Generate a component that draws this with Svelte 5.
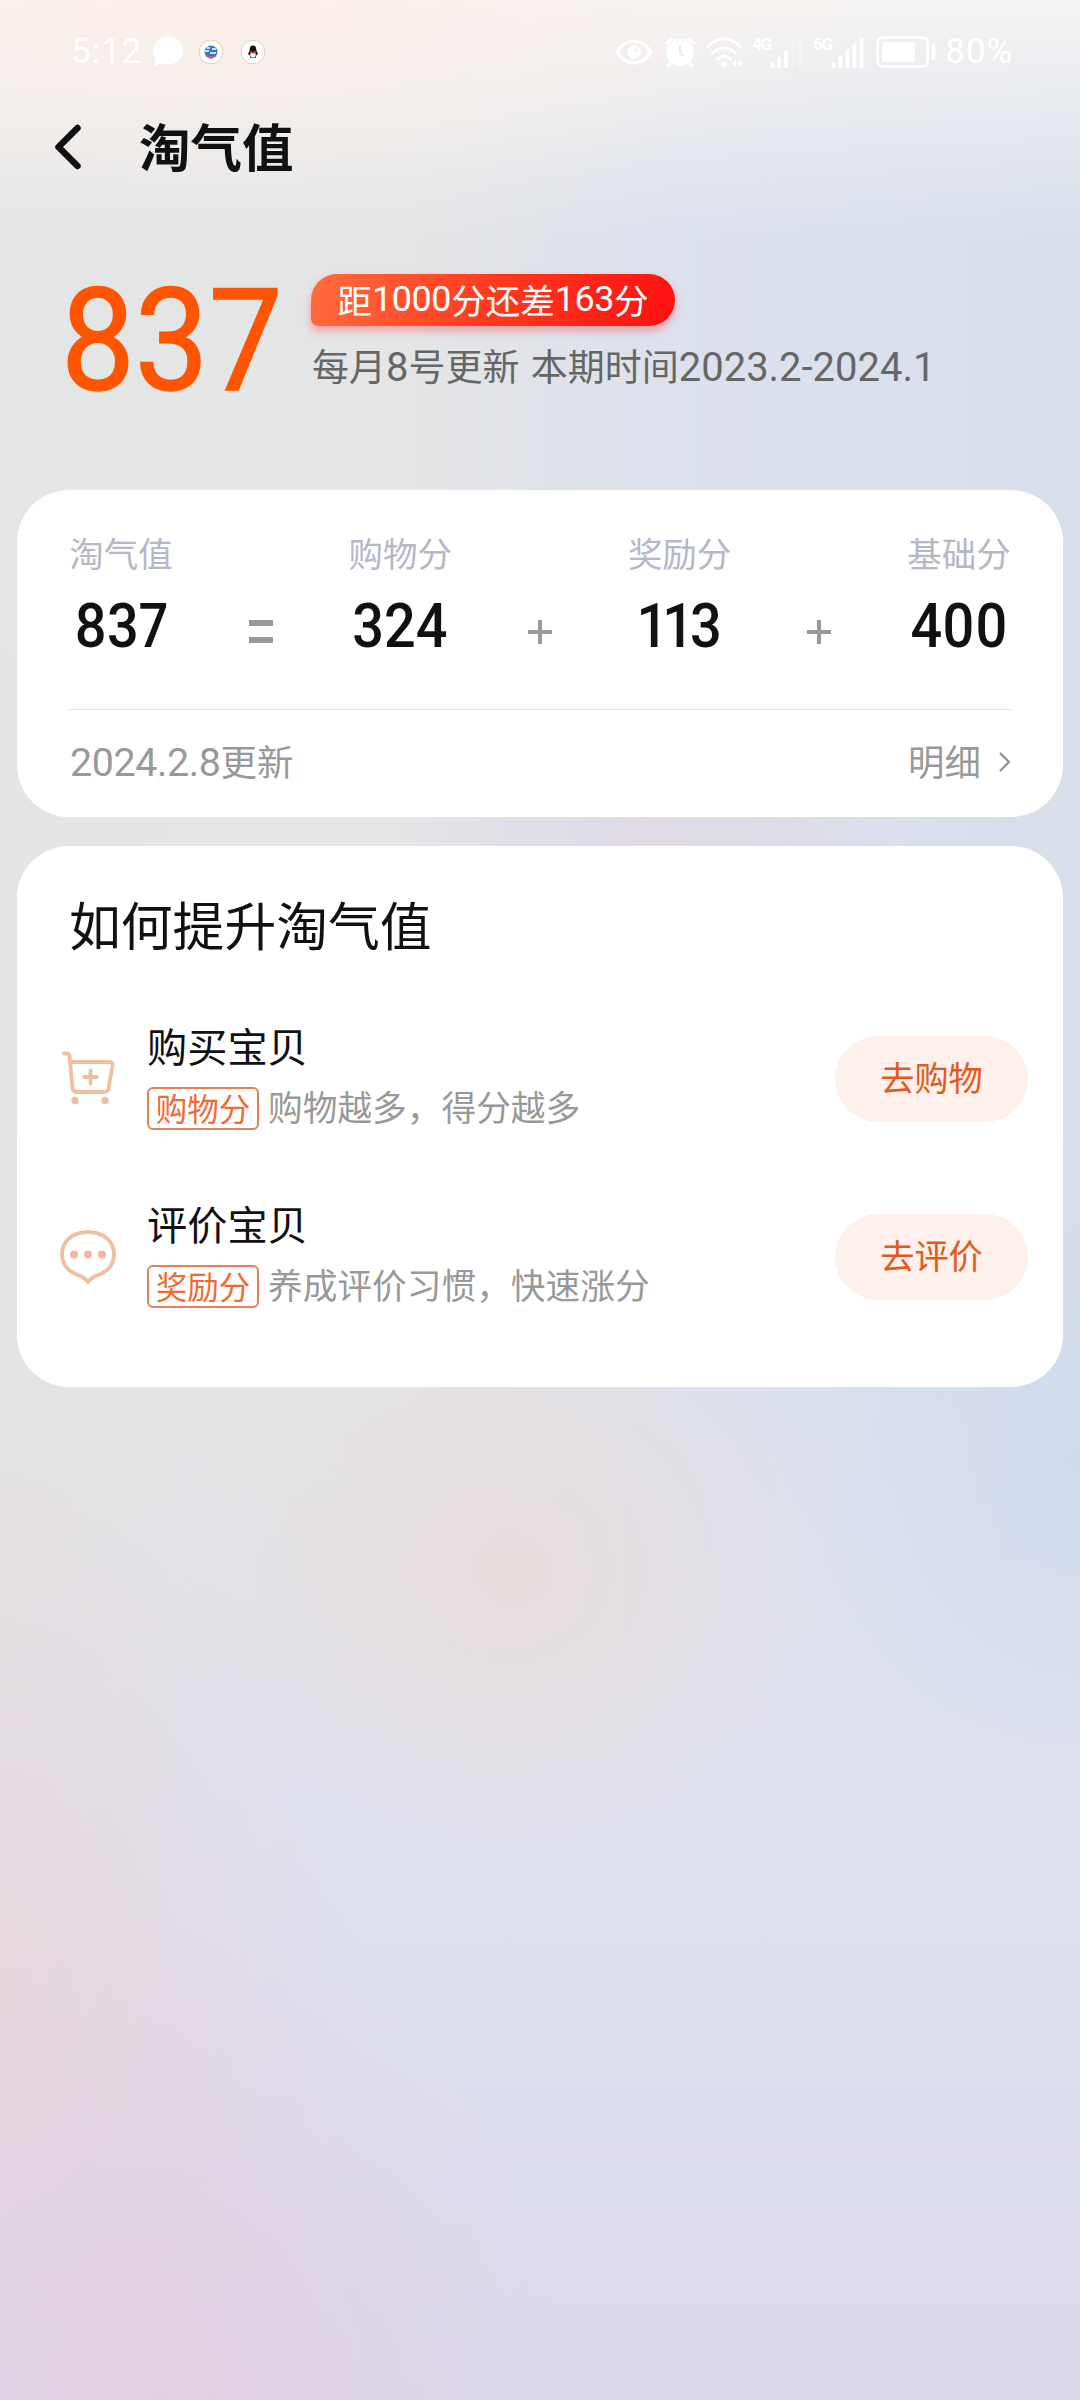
<script>
  const scores = [
    { label: '淘气值', value: '837' },
    { label: '购物分', value: '324', sign: 'equal' },
    { label: '奖励分', value: '113', sign: 'plus' },
    { label: '基础分', value: '400', sign: 'plus' }
  ];

  const tasks = [
    { icon: 'cart', title: '购买宝贝', tag: '购物分', desc: '购物越多，得分越多', action: '去购物' },
    { icon: 'comment', title: '评价宝贝', tag: '奖励分', desc: '养成评价习惯，快速涨分', action: '去评价' }
  ];

  // numbers use their own face, so split them from the Chinese text
  function parts(text) {
    return text.split(/([\d.\-]+)/).filter(Boolean).map((t) => ({ t, num: /\d/.test(t) }));
  }
</script>

{#snippet mixed(text)}{#each parts(text) as p}{#if p.num}<span class="num">{p.t}</span>{:else}{p.t}{/if}{/each}{/snippet}

<div class="page">
  <div class="status">
    <div class="status-left">
      <span class="time">5:12</span>
      <svg class="bubble" width="32" height="32" viewBox="0 0 32 32"><path d="M16 0.5C24.5 0.5 31 6.5 31 14.5S24.500 28.500 16 28.500C13 28.500 10.500 28 8.200 27L2 31L3.500 23.500C1.800 21 1 18 1 14.500C1 6.500 7.500 0.500 16 0.500Z" fill="#fff" /></svg>
      <svg class="app" width="26" height="26" viewBox="0 0 26 26">
        <circle cx="13" cy="13" r="11.800" fill="#fff" stroke="#e8cdb4" stroke-width="1" />
        <circle cx="13" cy="13" r="6.500" fill="#3478c8" />
        <path d="M8 17H18Q13 22 8 17Z" fill="#c4606c" />
        <path d="M7 12H11M12 14H18M14 10H18M9 9H12" stroke="#fff" stroke-width="1.500" />
      </svg>
      <svg class="app" width="26" height="26" viewBox="0 0 26 26">
        <circle cx="13" cy="13" r="11.800" fill="#fff" stroke="#e8cdb4" stroke-width="1" />
        <path d="M13 6.500C15.500 6.500 16.300 8.500 16.300 11L18 15L16.500 16L15.500 19H10.500L9.500 16L8 15L9.700 11C9.700 8.500 10.500 6.500 13 6.500Z" fill="#111" />
        <ellipse cx="13" cy="16" rx="2.800" ry="2.800" fill="#fff" />
        <path d="M9.500 12.500Q13 14.500 16.500 12.500" stroke="#d83b20" stroke-width="1.800" fill="none" />
      </svg>
    </div>
    <div class="status-right">
      <svg class="eye" width="38" height="26" viewBox="0 0 38 26"><path d="M2 13C8 4 14 2.200 19 2.200S30 4 36 13C30 22 24 23.800 19 23.800S8 22 2 13Z" fill="none" stroke="#fff" stroke-width="3.200" stroke-linejoin="round" /><circle cx="19" cy="13" r="6.800" fill="#fff" /><circle cx="21" cy="10.800" r="1.500" fill="#ebebec" /></svg>
      <svg class="alarm" width="32" height="31" viewBox="0 0 32 31"><circle cx="16" cy="15.500" r="13.800" fill="#fff" /><path d="M2.500 6L7.500 2M29.500 6L24.500 2" stroke="#fff" stroke-width="3" stroke-linecap="round" /><path d="M7 25L4 29M25 25L28 29" stroke="#fff" stroke-width="3.200" stroke-linecap="round" /><path d="M16 8.500V16L20 19.500" stroke="#e9e9eb" stroke-width="2" fill="none" /></svg>
      <svg class="wifi" width="38" height="31" viewBox="0 0 38 31"><path d="M1.500 9.500Q18 -6 34.500 9.500M6.500 16Q18 6 29.500 16M11.500 22Q18 16.500 24.500 22" fill="none" stroke="#fff" stroke-width="3" stroke-linecap="round" /><circle cx="18" cy="27.500" r="3.200" fill="#fff" /><path d="M29.500 23V29L26.500 26.500M33 30V24L36.500 26.500" fill="#fff" stroke="#fff" stroke-width="1.200" /></svg>
      <div class="signal"><span>4G</span><svg width="34" height="31" viewBox="0 0 34 31"><path d="M2.500 27V29.500M9 21.500V29.500M16 15V29.500" stroke="#fff" stroke-width="4" stroke-linecap="round" /><path d="M23 8V29.500M30 2.500V29.500" stroke="#fff" stroke-opacity=".25" stroke-width="4" stroke-linecap="round" /></svg></div>
      <div class="signal second"><span>5G</span><svg width="34" height="31" viewBox="0 0 34 31"><path d="M2.500 27V29.500M9.500 20.500V29.500M16.500 14V29.500M23.500 8V29.500M30.500 2.500V29.500" stroke="#fff" stroke-width="4" stroke-linecap="round" /></svg></div>
      <svg class="battery" width="60" height="32" viewBox="0 0 60 32"><rect x="1.600" y="1.600" width="50" height="28.800" rx="5" fill="none" stroke="#fff" stroke-width="3" /><rect x="6" y="6" width="33" height="20" rx="2" fill="#fff" /><rect x="55.500" y="8" width="4" height="16" rx="1.500" fill="#fff" /></svg>
      <span class="time">80%</span>
    </div>
  </div>

  <header class="bar">
    <svg width="26" height="46" viewBox="0 0 26 46"><path d="M22.500 4L3.500 23L22.500 42" fill="none" stroke="#111" stroke-width="6.500" stroke-linecap="round" stroke-linejoin="round" /></svg>
    <h1>淘气值</h1>
  </header>

  <section class="hero">
    <div class="score"><span>837</span></div>
    <div class="hero-info">
      <div class="badge">{@render mixed('距1000分还差163分')}</div>
      <div class="period">{@render mixed('每月8号更新 本期时间2023.2-2024.1')}</div>
    </div>
  </section>

  <section class="card formula">
    <div class="scores">
      {#each scores as s}
        {#if s.sign}
          <svg class="sign" width="24" height="24" viewBox="0 0 24 24">
            {#if s.sign === 'equal'}
              <path d="M0 3H24M0 20H24" stroke="#999" stroke-width="6" />
            {:else}
              <path d="M0 12H24M12 0V24" stroke="#999" stroke-width="4" />
            {/if}
          </svg>
        {/if}
        <div class="col">
          <span class="label">{s.label}</span>
          <span class="value">{s.value}</span>
        </div>
      {/each}
    </div>
    <div class="detail">
      <span>{@render mixed('2024.2.8更新')}</span>
      <span class="more">明细
        <svg width="12" height="20" viewBox="0 0 12 20"><path d="M1 1L10 10L1 19" fill="none" stroke="#888" stroke-width="2" /></svg>
      </span>
    </div>
  </section>

  <section class="card guide">
    <h2>如何提升淘气值</h2>
    {#each tasks as task}
      <div class="task">
        {#if task.icon === 'cart'}
          <svg class="icon" width="58" height="56" viewBox="0 0 58 56"><g fill="none" stroke="#efc0a0" stroke-width="3.800" stroke-linecap="round" stroke-linejoin="round"><path d="M4 2.500H7.500Q9 2.500 9.500 5L12.500 37Q13 41 16.500 41H44.500Q48 41 48.500 37.500L52.500 14.500Q53 11 49.500 11H10.500" /><path d="M30.500 19.500V32.500M24 26H37" /></g><circle cx="15" cy="49.500" r="3.800" fill="#efc0a0" /><circle cx="45" cy="49.500" r="3.800" fill="#efc0a0" /></svg>
        {:else}
          <svg class="icon" width="58" height="56" viewBox="0 0 58 56"><path d="M28 3C43.500 3 54 12.500 54 25C54 35 48 42.500 38 46Q33 47.500 31 50L28 53L25 50Q23 47.500 18 46C8 42.500 2 35 2 25C2 12.500 12.500 3 28 3Z" fill="none" stroke="#efc0a0" stroke-width="3.800" stroke-linejoin="round" /><circle cx="14" cy="25.500" r="4" fill="#efb8a0" /><circle cx="28" cy="25.500" r="4" fill="#efb8a0" /><circle cx="42" cy="25.500" r="4" fill="#efb8a0" /></svg>
        {/if}
        <div class="task-text">
          <div class="task-title">{task.title}</div>
          <div class="task-desc"><span class="tag">{task.tag}</span><span class="desc">{task.desc}</span></div>
        </div>
        <button type="button">{task.action}</button>
      </div>
    {/each}
  </section>
</div>

<style>
  :global(body) { margin: 0; }
  .page {
    box-sizing: border-box;
    width: 1080px;
    height: 2400px;
    overflow: hidden;
    font-family: "Noto Sans CJK SC", sans-serif;
    background:
      radial-gradient(ellipse 700px 200px at 20% 0, #fbeee8 0%, #fbeee800 100%),
      linear-gradient(#f4f3f2 0, #f4f3f200 240px),
      radial-gradient(ellipse 400px 480px at 160px 2400px, #e2d1e1 0%, #e2d1e100 100%),
      radial-gradient(ellipse 360px 560px at 0 2000px, #e6d7dd 0%, #e6d7dd00 100%),
      radial-gradient(ellipse 340px 300px at 510px 1570px, #e8dddd 0%, #e8dddd00 100%),
      radial-gradient(ellipse 280px 340px at 1080px 1460px, #d1daef 0%, #d1daef00 100%),
      radial-gradient(ellipse 260px 40px at 660px 832px, #e0d9e6 0%, #e0d9e600 100%),
      radial-gradient(ellipse 260px 700px at 0 1330px, #e5e2e3 0%, #e5e2e300 100%),
      linear-gradient(#dfe2ee00 1360px, #dfe2ee 1780px, #dad9eb 2400px),
      linear-gradient(90deg, #e5e5e5 0%, #e4e5e6 38%, #dce1ec 62%, #d7dfeb 100%);
  }
  .num { font-family: Roboto, sans-serif; font-size: 1.08em; letter-spacing: -0.01em; }

  .status { display: flex; justify-content: space-between; align-items: center; height: 104px; padding: 0 67px 0 71px; color: #fff; }
  .status-left, .status-right { display: flex; align-items: center; }
  .time { font: 400 35px/40px Roboto, sans-serif; letter-spacing: 0.9px; }
  .bubble { margin-left: 10px; }
  .app { margin-left: 14px; }
  .app + .app { margin-left: 16px; }
  .alarm { margin-left: 11px; }
  .wifi { margin-left: 10px; }
  .signal { display: flex; align-items: flex-start; margin-left: 8px; }
  .signal.second { margin-left: 9px; }
  .signal span { width: 18px; font: 700 17px/15px Roboto, sans-serif; letter-spacing: -1.5px; }
  .battery { margin: 0 9px 0 11px; }

  .bar { display: flex; align-items: center; height: 86px; padding-left: 55px; }
  h1 { margin: -4px 0 0 58px; font-size: 51.5px; line-height: 60px; font-weight: 700; color: #111; }

  .hero { display: flex; box-sizing: border-box; height: 300px; padding: 84px 0 0 61px; }
  .score { width: 250px; padding-top: 2px; font: 400 142px/132px Roboto, sans-serif; -webkit-text-stroke: 1.5px #ff5500; color: #ff5500; }
  .score span { display: inline-block; transform: scaleX(0.925); transform-origin: 0 50%; }
  .badge { display: flex; align-items: center; justify-content: center; box-sizing: border-box; width: 364px; height: 52px; padding-bottom: 3px; border-radius: 27px 27px 27px 7px; background: linear-gradient(100deg, #ff6c3e, #ff3a20 50%, #ff1010); box-shadow: 0 5px 8px #ff3c4066; color: #fff; font-size: 34.5px; line-height: 48px; white-space: nowrap; }
  .badge .num { font-size: 1.04em; }
  .period { margin: 13px 0 0 1px; font-size: 37px; line-height: 52px; color: #666; white-space: nowrap; word-spacing: 3px; }
  .period .num { letter-spacing: 0; }

  .card { box-sizing: border-box; width: 1046px; margin: 0 auto; border-radius: 52px; background: #fff; }
  .formula { height: 327px; padding: 0 52px; }
  .scores { display: flex; justify-content: space-between; height: 219px; border-bottom: 1px solid #e3e3e6; }
  .col { display: flex; flex-direction: column; align-items: center; width: 104px; padding-top: 40px; }
  .label { font-size: 34.5px; line-height: 44px; color: #b7b7c6; }
  .value { margin-top: 19px; font: 500 62px/66px Roboto, sans-serif; font-feature-settings: "pnum"; transform: scaleX(0.9); color: #111; }
  .sign { margin-top: 130px; }
  .detail { display: flex; justify-content: space-between; align-items: center; box-sizing: border-box; height: 107px; padding: 0 0 7px 1px; font-size: 36.5px; color: #999; }
  .more { display: flex; align-items: center; gap: 18px; }
  .more svg { margin-top: 4px; }

  .guide { height: 541px; margin-top: 29px; padding: 44px 35px 0 43px; }
  h2 { margin: 0 0 43px 9px; font-size: 51.8px; line-height: 68px; font-weight: 400; color: #111; }
  .task { display: flex; align-items: flex-start; box-sizing: border-box; height: 178px; }
  .icon { margin-top: 50px; }
  .task-text { flex: 1; margin-left: 29px; padding-top: 14px; }
  .task-title { font-size: 40.2px; line-height: 60px; color: #111; }
  .task-desc { display: flex; align-items: center; height: 43px; margin-top: 12px; font-size: 34.7px; color: #999; }
  .desc { margin-top: -5px; }
  .tag { display: flex; align-items: center; justify-content: center; box-sizing: border-box; width: 112px; height: 43px; margin-right: 9px; padding-bottom: 3px; border: 2px solid #e48158; border-radius: 6px; font-size: 31.5px; color: #f06a34; }
  button { width: 193px; height: 86px; margin-top: 35px; padding: 0 0 6px; border: none; border-radius: 43px; background: #fef0eb; font: 400 34.2px/40px "Noto Sans CJK SC", sans-serif; color: #e25a20; }
</style>
